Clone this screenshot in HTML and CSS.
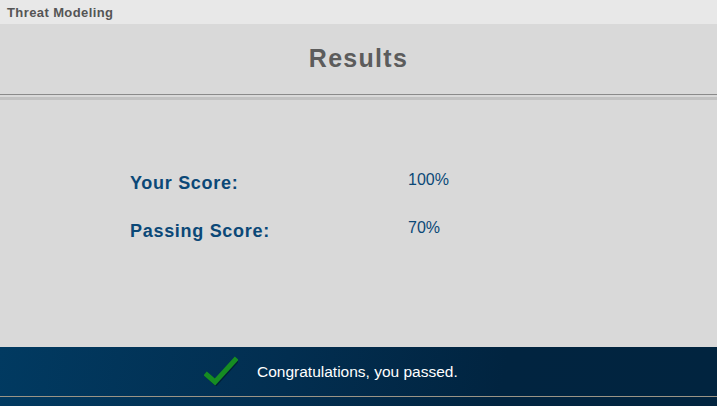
FILE: index.html
```html
<!DOCTYPE html>
<html>
<head>
<meta charset="utf-8">
<link rel="stylesheet" href="styles.css">
</head>
<body>
<div class="app">
  <div class="titlebar">Threat Modeling</div>
  <div class="header"><h1 class="heading">Results</h1></div>
  <div class="rule"></div>
  <div class="content">
    <div class="row">
      <div class="label">Your Score:</div>
      <div class="value">100%</div>
    </div>
    <div class="row">
      <div class="label">Passing Score:</div>
      <div class="value">70%</div>
    </div>
  </div>
  <div class="footer">
    <div class="message">
      <svg class="check" width="34" height="30" viewBox="0 0 34 30">
        <path d="M3 19 L11 26 L31 4" fill="none" stroke="#000" stroke-opacity="0.35" stroke-width="5" stroke-linecap="square" transform="translate(1,1)"/>
        <path d="M3 19 L11 26 L31 4" fill="none" stroke="#168c22" stroke-width="5" stroke-linecap="square"/>
      </svg>
      <span class="msg-text">Congratulations, you passed.</span>
    </div>
    <div class="footer-line"></div>
  </div>
</div>
</body>
</html>
```

FILE: styles.css
```css
html, body {
  margin: 0;
  padding: 0;
}
body {
  width: 717px;
  height: 406px;
  overflow: hidden;
  font-family: "Liberation Sans", Arial, sans-serif;
  background: #d9d9d9;
}
.app {
  display: flex;
  flex-direction: column;
  height: 406px;
}
.titlebar {
  height: 24px;
  background: #e8e8e8;
  color: #555;
  font-weight: bold;
  font-size: 13px;
  letter-spacing: 0.4px;
  line-height: 25px;
  padding-left: 7px;
  box-sizing: border-box;
}
.header {
  height: 70px;
  display: flex;
  align-items: center;
  justify-content: center;
}
.heading {
  margin: 0;
  font-size: 25px;
  letter-spacing: 1.3px;
  font-weight: bold;
  color: #5c5c5c;
  padding-bottom: 2px;
}
.rule {
  height: 6px;
  box-sizing: border-box;
  border-top: 1px solid #8a8a8a;
  border-bottom: 3px solid #c2c2c2;
  background: #d9d9d9;
}
.content {
  flex: 1;
  display: flex;
  flex-direction: column;
  gap: 23px;
  padding-top: 72px;
  padding-left: 130px;
}
.row {
  display: flex;
  align-items: flex-start;
  height: 25px;
}
.label {
  width: 278px;
  font-size: 18px;
  letter-spacing: 0.7px;
  font-weight: bold;
  color: #0b4877;
  padding-top: 1px;
}
.value {
  font-size: 16px;
  color: #0b4877;
  margin-top: -1px;
}
.footer {
  height: 59px;
  display: flex;
  flex-direction: column;
  background: linear-gradient(100deg, #013a61 0%, #022e50 40%, #012440 70%, #01243f 100%);
}
.message {
  height: 49px;
  display: flex;
  align-items: center;
  padding-left: 204px;
  box-sizing: border-box;
}
.check {
  margin-top: -2px;
  margin-right: 19px;
}
.msg-text {
  color: #ffffff;
  font-size: 15.5px;
  padding-top: 1px;
}
.footer-line {
  height: 1px;
  background: #9a9486;
}
```
